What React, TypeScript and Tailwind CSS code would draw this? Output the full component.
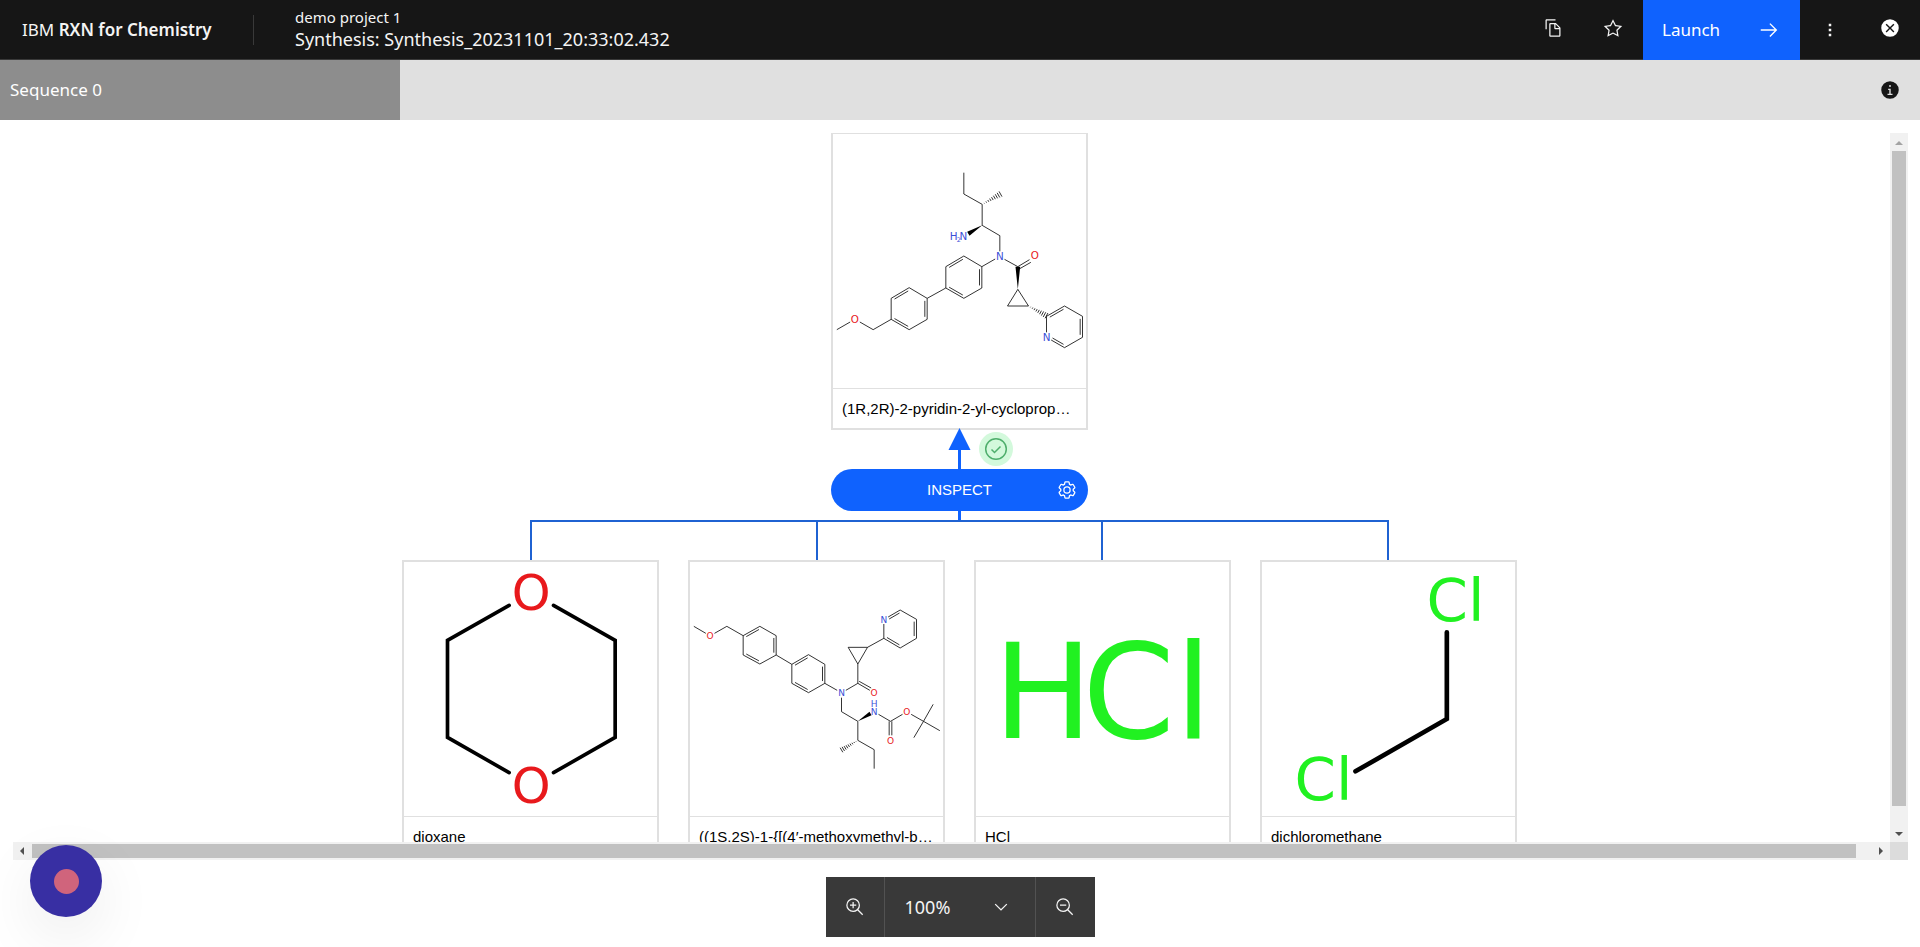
import type { ReactNode } from "react";

type Point = [number, number];

const COPY =
  "M27.4,14.7l-6.1-6.1C21,8.2,20.5,8,20,8h-8c-1.1,0-2,0.9-2,2v18c0,1.1,0.9,2,2,2h14c1.1,0,2-0.9,2-2V16.1C28,15.6,27.8,15.1,27.4,14.7z M20,10l5.9,6H20V10z M12,28V10h6v6c0,1.1,0.9,2,2,2h6v10H12z M6,18H4V4c0-1.1,0.9-2,2-2h14v2H6V18z";
const STAR =
  "M16,6.52l2.76,5.58.46,1,1,.15,6.16.89L22,18.44l-.75.73.18,1,1.05,6.13-5.51-2.89L16,23l-.93.49L9.56,26.34l1-6.13.18-1L10,18.44,5.58,14.09l6.16-.89,1-.15.46-1L16,6.52M16,2l-4.55,9.22L1.28,12.69l7.36,7.18L6.9,30,16,25.22,25.1,30,23.36,19.87l7.36-7.17L20.55,11.22Z";
const ARROW_RIGHT = "M18 6L16.57 7.393 24.15 15 4 15 4 17 24.15 17 16.57 24.573 18 26 28 16 18 6z";
const OVERFLOW = "M14 6h4v4h-4zM14 14h4v4h-4zM14 22h4v4h-4z";
const CLOSE =
  "M16,2A14,14,0,1,0,30,16,14,14,0,0,0,16,2ZM21.4,23L16,17.6,10.6,23,9,21.4,14.4,16,9,10.6,10.6,9,16,14.4,21.4,9,23,10.6,17.6,16,23,21.4Z";
const INFO =
  "M16,2A14,14,0,1,0,30,16,14,14,0,0,0,16,2Zm0,6a1.5,1.5,0,1,1-1.5,1.5A1.5,1.5,0,0,1,16,8Zm4,16.125H12v-2.25h2.875v-5.75H13v-2.25h4.125v8H20Z";
const LENS =
  "M21.4479,20A10.856,10.856,0,0,0,24,13,11,11,0,1,0,13,24a10.856,10.856,0,0,0,7-2.5521L27.5859,29,29,27.5859ZM13,22a9,9,0,1,1,9-9A9.01,9.01,0,0,1,13,22Z";
const CHEVRON = "M16 22L6 12 7.4 10.6 16 19.2 24.6 10.6 26 12z";
const GEAR =
  "M27,16.76c0-.25,0-.5,0-.76s0-.51,0-.77l1.92-1.68A2,2,0,0,0,29.3,11L26.94,7a2,2,0,0,0-1.73-1,2,2,0,0,0-.64.1l-2.43.82a11.35,11.35,0,0,0-1.31-.75l-.51-2.52a2,2,0,0,0-2-1.61H13.64a2,2,0,0,0-2,1.61l-.51,2.52a11.48,11.48,0,0,0-1.32.75L7.43,6.06A2,2,0,0,0,6.79,6,2,2,0,0,0,5.06,7L2.7,11a2,2,0,0,0,.41,2.51L5,15.24c0,.25,0,.5,0,.76s0,.51,0,.77L3.11,18.45A2,2,0,0,0,2.7,21L5.06,25a2,2,0,0,0,1.73,1,2,2,0,0,0,.64-.1l2.43-.82a11.35,11.35,0,0,0,1.31.75l.51,2.52a2,2,0,0,0,2,1.61h4.72a2,2,0,0,0,2-1.61l.51-2.52a11.48,11.48,0,0,0,1.32-.75l2.42.82a2,2,0,0,0,.64.1,2,2,0,0,0,1.73-1L29.3,21a2,2,0,0,0-.41-2.51ZM25.21,24l-3.43-1.16a8.86,8.86,0,0,1-2.71,1.57L18.36,28H13.64l-.71-3.55a9.36,9.36,0,0,1-2.7-1.57L6.79,24,4.43,20l2.72-2.4a8.9,8.9,0,0,1,0-3.13L4.43,12,6.79,8l3.43,1.16a8.86,8.86,0,0,1,2.71-1.57L13.64,4h4.72l.71,3.55a9.36,9.36,0,0,1,2.7,1.57L25.21,8,27.57,12l-2.72,2.4a8.9,8.9,0,0,1,0,3.13L27.57,20ZM16,22a6,6,0,1,1,6-6A5.94,5.94,0,0,1,16,22Zm0-10a3.91,3.91,0,0,0-4,4,3.91,3.91,0,0,0,4,4,3.91,3.91,0,0,0,4-4A3.91,3.91,0,0,0,16,12Z";

function Icon({ d, className = "size-5" }: { d: string; className?: string }) {
  return (
    <svg viewBox="0 0 32 32" fill="currentColor" fillRule="evenodd" className={className} aria-hidden="true">
      <path d={d} />
    </svg>
  );
}

function IconButton({ label, d, className = "" }: { label: string; d: string; className?: string }) {
  return (
    <button type="button" aria-label={label} className={`flex w-[60px] items-center justify-center ${className}`}>
      <Icon d={d} />
    </button>
  );
}

/* ---- molecule drawing helpers ---- */

function chain(...pts: Point[]) {
  return "M" + pts.map((p) => p.join(" ")).join("L");
}

/** Second line of a double bond, shortened and shifted towards `center`. */
function inner(a: Point, b: Point, center: Point, gap = 7) {
  const dx = b[0] - a[0];
  const dy = b[1] - a[1];
  const len = Math.hypot(dx, dy);
  let nx = -dy / len;
  let ny = dx / len;
  if (nx * (center[0] - a[0]) + ny * (center[1] - a[1]) < 0) {
    nx = -nx;
    ny = -ny;
  }
  const t = 0.12;
  return chain(
    [a[0] + dx * t + nx * gap, a[1] + dy * t + ny * gap],
    [b[0] - dx * t + nx * gap, b[1] - dy * t + ny * gap],
  );
}

function ringPath(pts: Point[], doubles: number[]) {
  const c: Point = [
    pts.reduce((s, p) => s + p[0], 0) / pts.length,
    pts.reduce((s, p) => s + p[1], 0) / pts.length,
  ];
  return (
    chain(...pts) +
    "Z" +
    doubles.map((i) => inner(pts[i], pts[(i + 1) % pts.length], c)).join("")
  );
}

function hash(a: Point, b: Point, width = 9, steps = 9) {
  const dx = b[0] - a[0];
  const dy = b[1] - a[1];
  const len = Math.hypot(dx, dy);
  let d = "";
  for (let i = 1; i <= steps; i++) {
    const t = i / steps;
    const w = width * t;
    const x = a[0] + dx * t;
    const y = a[1] + dy * t;
    d += chain([x - (dy / len) * w, y + (dx / len) * w], [x + (dy / len) * w, y - (dx / len) * w]);
  }
  return d;
}

function Atom({ x, y, size, children, start }: { x: number; y: number; size: number; children: string; start?: boolean }) {
  const color = children.includes("O") ? "fill-[#e8191c]" : children.includes("Cl") || size > 200 ? "fill-[#21f121]" : "fill-[#3b50d8]";
  return (
    <text x={x} y={y} fontSize={size} textAnchor={start ? "start" : "middle"} className={`font-['DejaVu_Sans',sans-serif] ${color}`}>
      {children}
    </text>
  );
}

function Molecule({ left, top, label, children }: { left: number; top: number; label: string; children: ReactNode }) {
  return (
    <svg viewBox={`${left} ${top} 756 762`} className="block h-[254px] w-full" fill="none" stroke="none" role="img" aria-label={label}>
      {children}
    </svg>
  );
}

const bond = "stroke-black stroke-[2.4px]";

function Product() {
  return (
    <Molecule left={39} top={42} label="Product structure">
      <path
        className={bond}
        d={
          chain([430, 158], [430, 222], [485, 253], [485, 316], [538, 347], [538, 394]) +
          chain([552, 418], [592, 440], [627, 419]) +
          chain([596, 447], [631, 427]) +
          chain([592, 508], [561, 558], [624, 558]) + "Z" +
          chain([484, 440], [524, 417]) +
          ringPath([[430, 408], [484, 440], [484, 504], [430, 535], [376, 504], [376, 440]], [1, 3, 5]) +
          chain([376, 504], [320, 535]) +
          ringPath([[266, 503], [320, 535], [320, 598], [266, 629], [212, 598], [212, 535]], [1, 3, 5]) +
          chain([212, 598], [158, 629], [118, 606]) +
          chain([89, 606], [49, 629]) +
          chain([678, 637], [678, 589], [732, 558], [786, 589], [786, 652], [732, 683], [692, 660]) +
          inner([678, 589], [732, 558], [732, 620]) +
          inner([786, 589], [786, 652], [732, 620]) +
          chain([729, 673], [696, 654])
        }
      />
      <path className="fill-black" d="M485 316L447 347 440 335ZM592 508L585 440 599 440Z" />
      <path className={bond} d={hash([485, 253], [540, 222]) + hash([624, 558], [678, 587])} />
      <Atom x={388} y={360} size={31} start>H</Atom>
      <Atom x={409} y={366} size={19} start>2</Atom>
      <Atom x={417} y={360} size={31} start>N</Atom>
      <Atom x={538} y={421} size={31}>N</Atom>
      <Atom x={643} y={417} size={31}>O</Atom>
      <Atom x={103} y={610} size={31}>O</Atom>
      <Atom x={678} y={664} size={31}>N</Atom>
    </Molecule>
  );
}

function Carbamate() {
  return (
    <Molecule left={30} top={36} label="Carbamate structure">
      <path
        className={bond}
        d={
          chain([40, 229], [76, 250]) +
          chain([102, 250], [139, 229], [188, 257]) +
          ringPath([[188, 257], [238, 229], [287, 257], [287, 315], [238, 342], [188, 315]], [0, 2, 4]) +
          chain([287, 315], [334, 343]) +
          ringPath([[334, 343], [384, 314], [433, 343], [433, 400], [384, 428], [334, 400]], [0, 2, 4]) +
          chain([433, 400], [470, 421]) +
          chain([496, 421], [532, 400], [568, 421]) +
          chain([536, 394], [572, 414]) +
          chain([532, 400], [532, 342], [503, 292], [561, 292], [532, 342]) +
          chain([561, 292], [610, 265], [610, 222]) +
          chain([623, 201], [659, 180], [708, 208], [708, 265], [659, 294], [610, 265]) +
          chain([626, 207], [657, 189]) +
          inner([708, 208], [708, 265], [659, 237]) +
          inner([659, 294], [610, 265], [659, 237]) +
          chain([483, 443], [483, 485], [532, 514], [532, 571], [581, 599], [581, 656]) +
          chain([594, 493], [630, 514], [666, 493]) +
          chain([626, 514], [626, 556]) +
          chain([634, 514], [634, 556]) +
          chain([692, 493], [729, 514], [758, 463]) +
          chain([778, 542], [729, 514], [700, 563])
        }
      />
      <path className="fill-black" d="M532 514L567 485 573 496Z" />
      <path className={bond} d={hash([532, 571], [483, 600], 8)} />
      <Atom x={89} y={267} size={27}>O</Atom>
      <Atom x={610} y={218} size={27}>N</Atom>
      <Atom x={483} y={438} size={27}>N</Atom>
      <Atom x={581} y={438} size={27}>O</Atom>
      <Atom x={581} y={471} size={27}>H</Atom>
      <Atom x={581} y={495} size={27}>N</Atom>
      <Atom x={679} y={495} size={27}>O</Atom>
      <Atom x={630} y={581} size={27}>O</Atom>
    </Molecule>
  );
}

function Dioxane() {
  return (
    <Molecule left={27} top={36} label="Dioxane structure">
      <path
        className="stroke-black stroke-[11px]"
        strokeLinecap="round"
        d="M341 166L156 271V562L341 668M474 166L659 271V562L474 668"
      />
      <Atom x={407} y={181} size={148}>O</Atom>
      <Atom x={407} y={760} size={148}>O</Atom>
    </Molecule>
  );
}

function HydrogenChloride() {
  return (
    <Molecule left={33} top={36} label="Hydrogen chloride structure">
      <Atom x={83} y={565} size={397} start>H</Atom>
      <Atom x={351} y={565} size={397} start>Cl</Atom>
    </Molecule>
  );
}

function Dichloromethane() {
  return (
    <Molecule left={51} top={36} label="Dichloromethane structure">
      <path className="stroke-black stroke-[14px]" strokeLinecap="round" d="M604 247V507L330 664" />
      <Atom x={543} y={214} size={178} start>Cl</Atom>
      <Atom x={147} y={750} size={178} start>Cl</Atom>
    </Molecule>
  );
}

function MoleculeCard({ name, children }: { name: string; children: ReactNode }) {
  return (
    <article className="w-[257px] shrink-0 border-2 border-[#e0e0e0] bg-white">
      {children}
      <p className="h-10 border-t border-[#e0e0e0] pl-[9px] text-[15px] leading-10 whitespace-nowrap text-black">{name}</p>
    </article>
  );
}

const reactants = [
  { name: "dioxane", drawing: <Dioxane /> },
  { name: "((1S,2S)-1-{[(4′-methoxymethyl-b…", drawing: <Carbamate /> },
  { name: "HCl", drawing: <HydrogenChloride /> },
  { name: "dichloromethane", drawing: <Dichloromethane /> },
];

function SynthesisTree() {
  return (
    <div className="-mt-px flex flex-col items-center pl-4 font-['Liberation_Sans',Arial,sans-serif]">
      <MoleculeCard name="(1R,2R)-2-pyridin-2-yl-cycloprop…">
        <Product />
      </MoleculeCard>
      <svg viewBox="0 0 257 41" className="-mt-0.5 block h-[41px] w-[257px]" aria-label="Reaction is valid" role="img">
        <path d="M128.500 0L139.500 22H117.500Z" className="fill-[#0f62fe]" />
        <path d="M127 20h3v21h-3z" className="fill-[#0f62fe]" />
        <circle cx="165" cy="21" r="17" className="fill-[#d3f9dc]" />
        <circle cx="165" cy="21" r="10.300" fill="none" strokeWidth="1.500" className="stroke-[#4fae6c]" />
        <path d="M160.500 21.500L163.500 24.500 169.500 18.500" fill="none" strokeWidth="1.500" className="stroke-[#4fae6c]" />
      </svg>
      <button
        type="button"
        className="grid h-[42px] w-[257px] grid-cols-[1fr_auto_1fr] items-center rounded-full bg-[#0f62fe] px-[11px] text-[15px] text-white"
      >
        <span className="col-start-2">INSPECT</span>
        <Icon d={GEAR} className="size-5 justify-self-end" />
      </button>
      <svg viewBox="0 0 1115 49" className="block h-[49px] w-[1115px]" aria-hidden="true">
        <path d="M556 0h3v10h-3z" className="fill-[#0f62fe]" />
        <path d="M129 49V10H986V49M415 49V10M700 49V10" fill="none" strokeWidth="2" className="stroke-[#1f62d2]" />
      </svg>
      <div className="flex gap-[29px]">
        {reactants.map((r) => (
          <MoleculeCard key={r.name} name={r.name}>
            {r.drawing}
          </MoleculeCard>
        ))}
      </div>
    </div>
  );
}

function Arrow({ points, className }: { points: string; className: string }) {
  return (
    <svg viewBox="0 0 18 18" className={`size-[18px] shrink-0 ${className}`} aria-hidden="true">
      <polygon points={points} />
    </svg>
  );
}

function Canvas() {
  return (
    <main className="grid min-h-0 flex-1 grid-cols-[minmax(0,1fr)_18px] grid-rows-[minmax(0,1fr)_18px] pt-[13px] pr-3 pl-[13px]">
      <div className="overflow-hidden">
        <SynthesisTree />
      </div>
      <div className="flex flex-col bg-[#f1f1f1]">
        <Arrow points="5,12 13,12 9,8" className="fill-[#a3a3a3]" />
        <div className="mx-0.5 flex-1 bg-[#c1c1c1]" />
        <div className="h-[18px]" />
        <Arrow points="5,8 13,8 9,12" className="fill-[#505050]" />
      </div>
      <div className="flex bg-[#f1f1f1]">
        <Arrow points="11,5 11,13 7,9" className="fill-[#505050]" />
        <div className="my-0.5 ml-px flex-1 bg-[#c1c1c1]" />
        <div className="w-4" />
        <Arrow points="7,5 7,13 11,9" className="fill-[#505050]" />
      </div>
      <div className="bg-[#dcdcdc]" />
    </main>
  );
}

export default function App() {
  return (
    <div className="relative flex h-screen flex-col overflow-hidden bg-white font-['Noto_Sans',sans-serif]">
      <header className="flex h-[60px] shrink-0 bg-[#161616] text-[#f4f4f4]">
        <div className="flex flex-1 items-center border-b border-[#393939]">
          <a href="#home" className="w-[231px] pl-[22px] text-[17px] whitespace-nowrap">
            IBM <strong className="font-semibold">RXN for Chemistry</strong>
          </a>
          <div className="ml-[22px] flex h-[30px] items-center border-l border-[#393939] pl-[41px]">
            <div className="pb-1 whitespace-nowrap">
              <p className="text-[15px] leading-[22px]">demo project 1</p>
              <h1 className="text-lg leading-[22px]">Synthesis: Synthesis_20231101_20:33:02.432</h1>
            </div>
          </div>
        </div>
        <IconButton label="Copy" d={COPY} className="border-b border-[#393939] pb-1" />
        <IconButton label="Favourite" d={STAR} className="border-b border-[#393939] pb-1" />
        <button type="button" className="flex w-[157px] items-center justify-between bg-[#0f62fe] pr-5 pl-[19px] text-[17px] text-white">
          Launch
          <Icon d={ARROW_RIGHT} className="size-[22px]" />
        </button>
        <IconButton label="More options" d={OVERFLOW} className="border-b border-[#393939]" />
        <IconButton label="Close" d={CLOSE} className="border-b border-[#393939] pb-1 text-white" />
      </header>
      <nav className="flex h-[60px] shrink-0 justify-between bg-[#e0e0e0]">
        <button type="button" className="w-[400px] bg-[#8d8d8d] pl-[10px] text-left text-[17px] text-white">
          Sequence 0
        </button>
        <IconButton label="Information" d={INFO} className="text-[#161616]" />
      </nav>
      <Canvas />
      <footer className="flex shrink-0 justify-center pt-[17px] pb-[10px]">
        <div className="flex h-[60px] bg-[#393939] text-[#f4f4f4]">
          <button type="button" aria-label="Zoom in" className="flex w-[58px] items-center justify-center">
            <Icon d={`M18,12H14V8H12v4H8v2h4v4h2V14h4Z${LENS}`} />
          </button>
          <div className="relative flex w-[152px] items-center border-x border-[#525252]">
            <select aria-label="Zoom level" defaultValue="100%" className="h-full w-full appearance-none bg-transparent pl-5 text-lg">
              <option>50%</option>
              <option>100%</option>
              <option>150%</option>
            </select>
            <Icon d={CHEVRON} className="pointer-events-none absolute right-6 size-5" />
          </div>
          <button type="button" aria-label="Zoom out" className="flex w-[59px] items-center justify-center">
            <Icon d={`M8,12H18v2H8Z${LENS}`} />
          </button>
        </div>
      </footer>
      <button
        type="button"
        aria-label="Open guide"
        className="absolute bottom-[30px] left-[30px] flex size-[72px] items-center justify-center rounded-full bg-[#382fa3] shadow-[0_20px_60px_rgba(0,0,0,0.08)]"
      >
        <span className="size-[25px] rounded-full bg-[#d0647c]" />
      </button>
    </div>
  );
}
